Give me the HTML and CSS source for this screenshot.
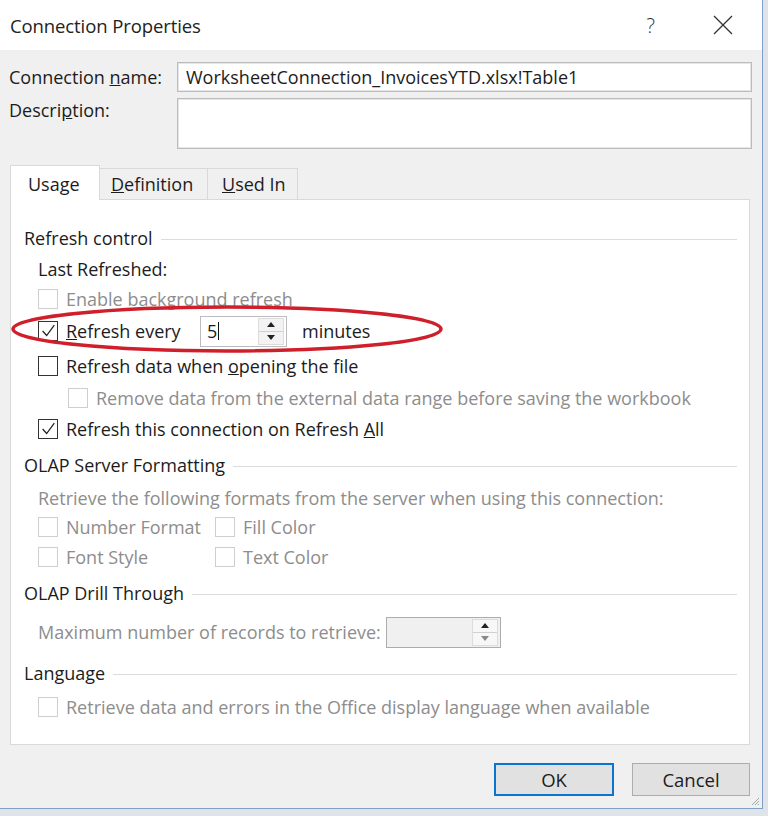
FILE: index.html
```html
<!DOCTYPE html>
<html>
<head>
<meta charset="utf-8">
<title>Connection Properties</title>
<link rel="stylesheet" href="styles.css">
</head>
<body>
<div class="screen">
  <div class="dialog">
    <div class="titlebar">
      <span class="title">Connection Properties</span>
      <span class="help">?</span>
      <svg class="close" width="20" height="20" viewBox="0 0 20 20"><path d="M1 1 L19 19 M19 1 L1 19" stroke="#333" stroke-width="1.3" fill="none"/></svg>
    </div>
    <div class="body">
      <div class="form">
        <label class="flabel">Connection <u>n</u>ame:</label>
        <div class="input">WorksheetConnection_InvoicesYTD.xlsx!Table1</div>
        <label class="flabel top">Descri<u>p</u>tion:</label>
        <div class="textarea"></div>
      </div>

      <div class="tabs">
        <div class="tab active">Usa<u>g</u>e</div>
        <div class="tab"><u>D</u>efinition</div>
        <div class="tab"><u>U</u>sed In</div>
      </div>

      <div class="panel">
        <div class="row h32 heading"><span>Refresh control</span><span class="rule"></span></div>
        <div class="row h30 item"><span>Last Refreshed:</span></div>
        <div class="row h30 item disabled"><span class="cb"></span><span>Enable background refresh</span></div>
        <div class="row h34 item"><span class="cb checked"><svg viewBox="0 0 20 20"><path d="M4 10 L8.5 15 L17 3.5" stroke="#222" stroke-width="1.4" fill="none"/></svg></span><span class="every"><u>R</u>efresh every</span>
          <div class="spin"><span class="spin-val">5<span class="caret"></span></span><span class="spin-btns"><span class="arr up"></span><span class="arr down"></span></span></div>
          <span class="minutes">minutes</span>
        </div>
        <div class="row h36 item"><span class="cb"></span><span>Refresh data when <u>o</u>pening the file</span></div>
        <div class="row h28 item sub disabled"><span class="cb"></span><span>Remove data from the external data range before saving the workbook</span></div>
        <div class="row h34 item"><span class="cb checked"><svg viewBox="0 0 20 20"><path d="M4 10 L8.5 15 L17 3.5" stroke="#222" stroke-width="1.4" fill="none"/></svg></span><span>Refresh this connection on Refresh <u>A</u>ll</span></div>

        <div class="row h38 heading"><span>OLAP Server Formatting</span><span class="rule"></span></div>
        <div class="row h28 item disabled"><span>Retrieve the following formats from the server when using this connection:</span></div>
        <div class="row h30 item disabled"><span class="pair"><span class="cb"></span>Number Format</span><span class="pair"><span class="cb"></span>Fill Color</span></div>
        <div class="row h30 item disabled"><span class="pair"><span class="cb"></span>Font Style</span><span class="pair"><span class="cb"></span>Text Color</span></div>

        <div class="row h42 heading"><span>OLAP Drill Through</span><span class="rule"></span></div>
        <div class="row h36 item disabled"><span class="maxlabel">Maximum number of records to retrieve:</span>
          <div class="spin gray"><span class="spin-val"></span><span class="spin-btns"><span class="arr up"></span><span class="arr down"></span></span></div>
        </div>

        <div class="row h46 heading"><span>Language</span><span class="rule"></span></div>
        <div class="row h22 item disabled"><span class="cb"></span><span>Retrieve data and errors in the Office display language when available</span></div>
      </div>

      <div class="buttons">
        <div class="btn default">OK</div>
        <div class="btn">Cancel</div>
      </div>
    </div>
    <svg class="grip" width="10" height="10" viewBox="0 0 10 10"><path d="M9 2 L2 9 M9 5 L5 9 M9 8 L8 9" stroke="#9aa" stroke-width="1"/></svg>
  </div>
  <svg class="annot" width="440" height="52" viewBox="0 0 440 52"><ellipse cx="218" cy="25" rx="214" ry="22" stroke="#cf1f2b" stroke-width="3.5" fill="none"/></svg>
</div>
</body>
</html>
```
FILE: styles.css
```css
html, body {
  margin: 0;
  padding: 0;
}
body {
  background: #e9ecef;
  font-family: "Open Sans", "Noto Sans", sans-serif;
  color: #1c1c1c;
}
.screen {
  position: relative;
  width: 768px;
  height: 816px;
  overflow: hidden;
  background: #dfe4ea;
}
.dialog {
  position: relative;
  width: 763px;
  height: 809px;
  box-sizing: border-box;
  border-right: 1px solid #7f9fc7;
  border-bottom: 1px solid #7f9fc7;
  display: flex;
  flex-direction: column;
  background: #f0f0f0;
}
.titlebar {
  height: 50px;
  flex: none;
  background: #ffffff;
  display: flex;
  align-items: center;
  padding: 0 29px 0 10px;
}
.title {
  font-size: 18.5px;
  letter-spacing: -0.1px;
  color: #222;
}
.help {
  margin-left: auto;
  font-size: 20px;
  font-weight: 300;
  color: #333;
}
.close {
  margin-left: 58px;
}
.body {
  flex: 1;
  padding: 12px 10px 0 9px;
  font-size: 18px;
}
.form {
  display: grid;
  grid-template-columns: 168px 575px;
  row-gap: 6px;
  align-items: center;
}
.flabel {
  color: #1c1c1c;
}
.flabel.top {
  align-self: start;
  line-height: 24px;
}
.input, .textarea {
  box-sizing: border-box;
  background: #fff;
  border: 1px solid #bcbcbc;
  box-shadow: inset 0 0 0 1px #e6e6e6;
}
.input {
  height: 30px;
  line-height: 28px;
  padding-left: 8px;
  font-size: 18px;
  white-space: nowrap;
}
.textarea {
  height: 51px;
}
.tabs {
  margin-top: 16px;
  margin-left: 1px;
  display: flex;
  align-items: flex-end;
  height: 34px;
  position: relative;
  z-index: 1;
}
.tab {
  box-sizing: border-box;
  height: 31px;
  line-height: 30px;
  padding: 0 6px 0 12px;
  border: 1px solid #d9d9d9;
  border-bottom: none;
  border-left: none;
  background: #f0f0f0;
  color: #1c1c1c;
  white-space: nowrap;
}
.tab:nth-child(2) { width: 108px; padding-left: 11px; }
.tab:nth-child(3) { width: 90px; padding-left: 14px; }
.tab.active {
  width: 90px;
  height: 35px;
  margin-bottom: -1px;
  border-left: 1px solid #d9d9d9;
  background: #fff;
  padding-left: 17px;
  line-height: 36px;
}
.panel {
  box-sizing: border-box;
  width: 740px;
  height: 546px;
  margin-left: 1px;
  background: #fff;
  border: 1px solid #d9d9d9;
  padding: 22px 12px 0 13px;
}
.row {
  display: flex;
  align-items: center;
  white-space: nowrap;
}
.h22 { height: 22px; }
.h28 { height: 28px; }
.h30 { height: 30px; }
.h32 { height: 32px; }
.h34 { height: 34px; }
.h36 { height: 36px; }
.h38 { height: 38px; }
.h42 { height: 42px; }
.h46 { height: 46px; }
.heading .rule {
  flex: 1;
  height: 1px;
  background: #dcdcdc;
  margin-left: 8px;
  margin-top: 2px;
}
.item {
  padding-left: 14px;
}
.item.sub {
  padding-left: 44px;
}
.disabled {
  color: #8d8d8d;
}
.cb {
  box-sizing: border-box;
  width: 20px;
  height: 20px;
  border: 1px solid #333;
  background: #fff;
  margin-right: 8px;
  flex: none;
  display: inline-block;
}
.disabled .cb {
  border-color: #cfcfcf;
}
.cb svg {
  display: block;
  width: 18px;
  height: 18px;
}
.pair {
  display: flex;
  align-items: center;
  width: 177px;
}
.every {
  width: 134px;
}
.spin {
  box-sizing: border-box;
  width: 87px;
  height: 31px;
  border: 1px solid #bcbcbc;
  background: #fff;
  display: flex;
}
.spin-val {
  flex: 1;
  padding-left: 6px;
  line-height: 29px;
  display: flex;
  align-items: center;
}
.caret {
  display: inline-block;
  width: 1px;
  height: 18px;
  background: #111;
  margin-left: 1px;
}
.spin-btns {
  width: 24px;
  margin: 1px 2px 1px 0;
  display: flex;
  flex-direction: column;
  border: 1px solid #dcdcdc;
  background: #f3f3f3;
}
.arr {
  flex: 1;
  display: flex;
  align-items: center;
  justify-content: center;
}
.arr.up { border-bottom: 1px solid #d0d0d0; }
.arr::after {
  content: "";
  width: 0;
  height: 0;
  border-left: 4px solid transparent;
  border-right: 4px solid transparent;
}
.arr.up::after { border-bottom: 5px solid #222; }
.arr.down::after { border-top: 5px solid #222; }
.minutes {
  margin-left: 15px;
}
.maxlabel {
  width: 348px;
}
.spin.gray {
  width: 115px;
  background: #f0f0f0;
  border-color: #adadad;
}
.spin.gray .spin-btns {
  background: #f7f7f7;
}
.spin.gray .arr.down::after { border-top-color: #888; }
.buttons {
  margin-top: 18px;
  display: flex;
  justify-content: flex-end;
  gap: 18px;
  padding-right: 2px;
}
.btn {
  box-sizing: border-box;
  width: 118px;
  height: 33px;
  line-height: 31px;
  text-align: center;
  background: #e1e1e1;
  border: 1px solid #adadad;
  font-size: 18.5px;
}
.btn.default {
  width: 120px;
  border: 2px solid #0b74cf;
  line-height: 29px;
}
.grip {
  position: absolute;
  right: 2px;
  bottom: 2px;
}
.annot {
  position: absolute;
  left: 9px;
  top: 304px;
}
```
